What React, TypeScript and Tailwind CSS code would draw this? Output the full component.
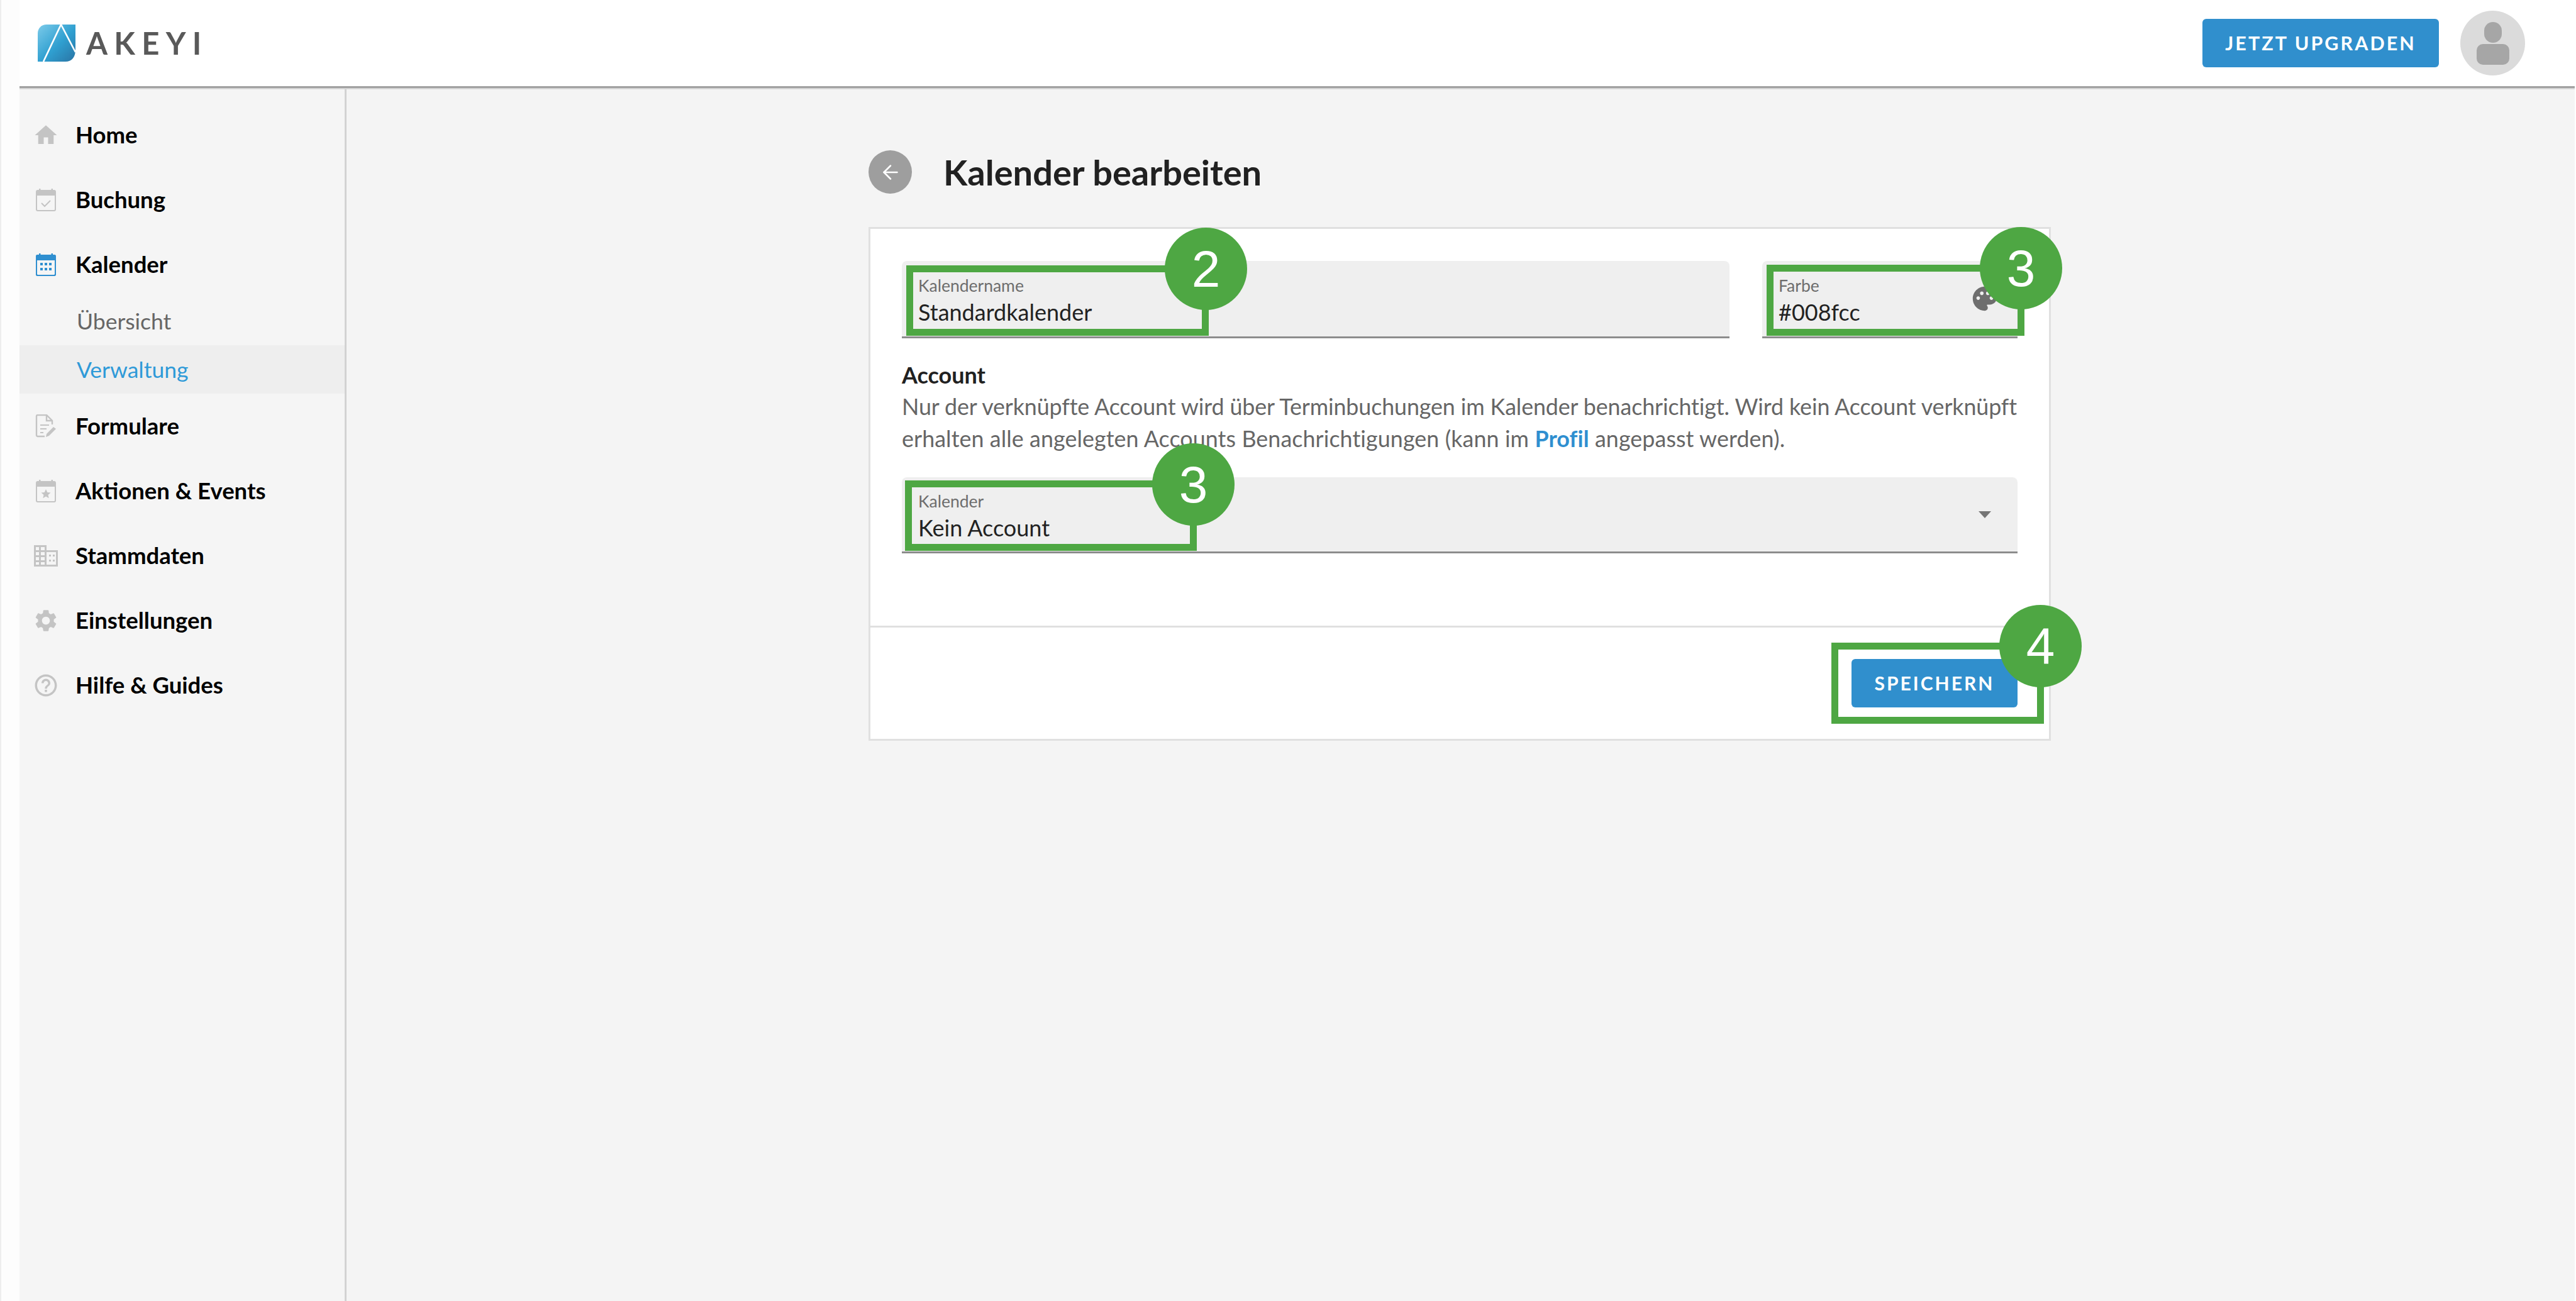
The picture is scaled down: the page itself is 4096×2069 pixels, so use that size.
import React from 'react';
import { ArrowLeft } from 'lucide-react';
import { MdHome, MdSettings, MdHelpOutline, MdPalette } from 'react-icons/md';

function CalendarIcon({ color, children }: { color: string; children?: React.ReactNode }) {
  return (
    <svg width="32" height="36" viewBox="0 0 32 36">
      <path d="M5 0h2.500v4H5zM24.500 0H27v4h-2.500z" fill={color} />
      <rect x="1" y="3" width="30" height="32" rx="2" fill="none" stroke={color} strokeWidth="2" />
      <rect x="1" y="3" width="30" height="8" fill={color} />
      {children}
    </svg>
  );
}

const gray = '#c4c4c4';

const BuchungIcon = () => (
  <CalendarIcon color={gray}>
    <path d="M9 23l5 5 9-9" fill="none" stroke={gray} strokeWidth="2" />
  </CalendarIcon>
);

const KalenderIcon = () => (
  <CalendarIcon color="#2f8fd0">
    <rect x="1" y="3" width="30" height="32" rx="2" fill="none" stroke="#2f8fd0" strokeWidth="2" />
    <path d="M7 15h4v4H7zM14 15h4v4h-4zM21 15h4v4h-4zM7 23h4v4H7zM14 23h4v4h-4zM21 23h4v4h-4z" fill="#2f8fd0" />
  </CalendarIcon>
);

const EventIcon = () => (
  <CalendarIcon color={gray}>
    <path d="M16 15l2.300 5 5.200.5-4 3.500 1.200 5.300-4.700-2.800-4.700 2.800 1.200-5.300-4-3.500 5.200-.5z" fill={gray} />
  </CalendarIcon>
);

const FormIcon = () => (
  <svg width="34" height="38" viewBox="0 0 34 38" fill="none" stroke={gray} strokeWidth="2.400">
    <path d="M15 35H4a2 2 0 0 1-2-2V3a2 2 0 0 1 2-2h14l9 9v6" />
    <path d="M18 1v9h9" />
    <path d="M8 17h14M8 23h10M8 29h5" strokeWidth="2" />
    <path d="M17 36l1-5 11-11 4 3-11 11z" fill={gray} stroke="none" />
  </svg>
);

const BuildingIcon = () => (
  <svg width="38" height="34" viewBox="0 0 38 34" fill={gray}>
    <path fillRule="evenodd" d="M0 0h20v8h18v26H0zM3 3v5h5V3zM11 3v5h6V3zM3 11v5h5v-5zM11 11v5h6v-5zM3 19v5h5v-5zM11 19v5h6v-5zM3 27v4h5v-4zM11 27v4h6v-4zM20 11v20h15V11zM24 15v3h3v-3zM30 15v3h3v-3zM24 23v3h3v-3zM30 23v3h3v-3z" />
  </svg>
);

type NavItem = { label: string; icon?: React.ReactNode; sub?: boolean; active?: boolean };

const navItems: NavItem[] = [
  { label: 'Home', icon: <MdHome size={42} color={gray} /> },
  { label: 'Buchung', icon: <BuchungIcon /> },
  { label: 'Kalender', icon: <KalenderIcon /> },
  { label: 'Übersicht', sub: true },
  { label: 'Verwaltung', sub: true, active: true },
  { label: 'Formulare', icon: <FormIcon /> },
  { label: 'Aktionen & Events', icon: <EventIcon /> },
  { label: 'Stammdaten', icon: <BuildingIcon /> },
  { label: 'Einstellungen', icon: <MdSettings size={42} color={gray} /> },
  { label: 'Hilfe & Guides', icon: <MdHelpOutline size={42} color={gray} /> },
];

function Logo() {
  return (
    <div className="flex items-center">
      <svg width="60" height="59" viewBox="0 0 60 59">
        <defs>
          <linearGradient id="akeyiMark" x1="0" y1="0" x2="1" y2="1">
            <stop offset="0" stopColor="#7ccbea" />
            <stop offset="0.55" stopColor="#2f9fd0" />
            <stop offset="1" stopColor="#2a74a4" />
          </linearGradient>
        </defs>
        <path d="M14 0H60V40C60 52 54 59 44 59H0V14C0 6 6 0 14 0Z" fill="url(#akeyiMark)" />
        <path d="M9 59L37 0L60 44" fill="none" stroke="#fff" strokeWidth="2.600" />
      </svg>
      <span className="ml-[17px] font-[Lato,sans-serif] text-[49px] font-bold leading-none tracking-[0.21em] text-[#595959]">AKEYI</span>
    </div>
  );
}

function Sidebar() {
  return (
    <aside className="w-[520px] shrink-0 border-r-[3px] border-[#d2d2d2] bg-[#f5f5f5] pt-[23px]">
      {navItems.map((item) => (
        <div
          key={item.label}
          className={`flex items-center ${item.sub ? 'h-[77px]' : 'h-[103px]'} ${item.active ? 'bg-[#eeeeee]' : ''}`}
        >
          <div className="flex w-[89px] shrink-0 justify-center pr-[5px]">{item.icon}</div>
          {item.sub ? (
            <span className={`ml-[2px] text-[35.500px] ${item.active ? 'text-[#2f9ad8]' : 'text-[#666666]'}`}>{item.label}</span>
          ) : (
            <span className="text-[36.500px] font-bold text-black">{item.label}</span>
          )}
        </div>
      ))}
    </aside>
  );
}

function Field({ label, value, className, children }: { label: string; value: string; className?: string; children?: React.ReactNode }) {
  return (
    <div className={`flex items-center justify-between rounded-t-[8px] border-b-[3px] border-[#8c8c8c] bg-[#efefef] pl-[26px] ${className ?? ''}`}>
      <div className="pt-[5px]">
        <div className="text-[26.500px] leading-[36px] text-[#6d6d6d]">{label}</div>
        <div className="text-[36px] leading-[48px] text-[#222222]">{value}</div>
      </div>
      {children}
    </div>
  );
}

function Callout({ box, circle, digit }: { box: string; circle: string; digit: string }) {
  return (
    <>
      <div className={`absolute border-[11px] border-[#4ea743] ${box}`} />
      <div className={`absolute flex h-[131px] w-[131px] items-center justify-center rounded-full bg-[#4ea743] font-['Liberation_Sans',sans-serif] text-[82px] text-white ${circle}`}>
        {digit}
      </div>
    </>
  );
}

export default function App() {
  return (
    <div className="relative flex h-[2069px] w-[4096px] overflow-hidden bg-white font-[Lato,sans-serif]">
      <div className="w-[31px] shrink-0 border-l-[2px] border-[#eeeeee] bg-[#fdfdfd]" />
      <div className="flex w-[4063px] shrink-0 flex-col">
        <header className="relative z-10 flex h-[140px] shrink-0 items-center justify-between border-b-[3px] border-[#a0a0a0] bg-white pl-[29px] pr-[79px] shadow-[0_2px_0_#d6d6d6]">
          <Logo />
          <div className="flex items-center gap-[34px]">
            <button className="flex h-[77px] w-[376px] items-center justify-center rounded-[6px] bg-[#308fcd] text-[30.500px] font-bold tracking-[0.1em] text-white">
              JETZT UPGRADEN
            </button>
            <div className="flex h-[103px] w-[103px] flex-col items-center justify-center rounded-full bg-[#dbdbdb]">
              <div className="h-[33px] w-[28px] rounded-full bg-[#a6a6a6]" />
              <div className="mt-[2px] h-[33px] w-[52px] rounded-[10px] bg-[#a6a6a6]" />
            </div>
          </div>
        </header>
        <div className="flex flex-1">
          <Sidebar />
          <main className="flex-1 bg-[#f4f4f4] pl-[830px] pt-[99px]">
            <div className="flex h-[69px] items-center">
              <div className="flex h-[69px] w-[69px] items-center justify-center rounded-full bg-[#9e9e9e]">
                <ArrowLeft size={36} color="#ffffff" strokeWidth={1.7} />
              </div>
              <h1 className="ml-[50px] text-[56px] font-bold text-[#212121]">Kalender bearbeiten</h1>
            </div>
            <section className="mt-[53px] h-[817px] w-[1880px] border-[3px] border-[#e0e0e0] bg-white">
              <div className="h-[631px] px-[50px] pt-[51px]">
                <div className="flex gap-[52px]">
                  <Field label="Kalendername" value="Standardkalender" className="h-[123px] flex-1" />
                  <Field label="Farbe" value="#008fcc" className="h-[123px] w-[406px]">
                    <MdPalette size={46} color="#6e6e6e" className="mr-[29px]" />
                  </Field>
                </div>
                <h2 className="mt-[33px] text-[36px] font-bold leading-[50px] text-[#212121]">Account</h2>
                <p className="whitespace-nowrap text-[35.800px] leading-[51px] text-[#666666]">
                  <span className="tracking-[-0.1px]">Nur der verknüpfte Account wird über Terminbuchungen im Kalender benachrichtigt. Wird kein Account verknüpft</span>
                  <br />
                  <span className="tracking-[0.1px]">erhalten alle angelegten Accounts Benachrichtigungen (kann im <b className="text-[#2f8fd0]">Profil</b> angepasst werden).</span>
                </p>
                <Field label="Kalender" value="Kein Account" className="mt-[36px] h-[121px]">
                  <svg width="20" height="11" viewBox="0 0 20 11" className="mr-[42px]">
                    <path d="M0 0h20L10 11z" fill="#757575" />
                  </svg>
                </Field>
              </div>
              <div className="flex h-[180px] items-start justify-end border-t-[3px] border-[#e0e0e0] pr-[50px] pt-[50px]">
                <button className="flex h-[77px] w-[264px] items-center justify-center rounded-[6px] bg-[#308fcd] text-[30px] font-bold tracking-[0.1em] text-white">
                  SPEICHERN
                </button>
              </div>
            </section>
          </main>
        </div>
      </div>
      <div className="w-[2px] shrink-0 bg-white" />

      <Callout box="left-[1441px] top-[422px] h-[112px] w-[481px]" circle="left-[1852px] top-[362px]" digit="2" />
      <Callout box="left-[2809px] top-[421px] h-[113px] w-[410px]" circle="left-[3148px] top-[361px]" digit="3" />
      <Callout box="left-[1439px] top-[764px] h-[112px] w-[464px]" circle="left-[1832px] top-[705px]" digit="3" />
      <Callout box="left-[2912px] top-[1022px] h-[129px] w-[338px]" circle="left-[3179px] top-[962px]" digit="4" />
    </div>
  );
}
